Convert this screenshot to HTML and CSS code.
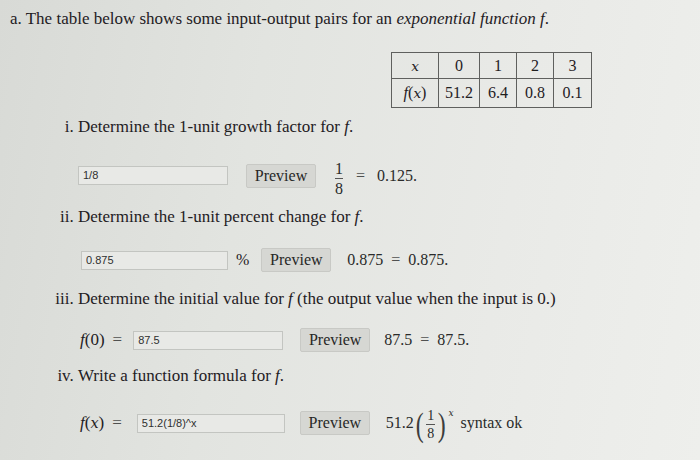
FILE: index.html
```html
<!DOCTYPE html>
<html>
<head>
<meta charset="utf-8">
<link rel="stylesheet" href="styles.css">
</head>
<body>
<div class="page">
  <p class="intro"><span class="label">a.</span> The table below shows some input-output pairs for an <em>exponential function</em> <i class="fn">f</i>.</p>
  <div class="table-wrap">
    <table class="pairs">
      <colgroup><col class="c0"><col class="c1"><col class="c2"><col class="c3"><col class="c4"></colgroup>
      <tr><th><i class="mx">x</i></th><td>0</td><td>1</td><td>2</td><td>3</td></tr>
      <tr><th><i class="fn">f</i>(<i class="mx">x</i>)</th><td>51.2</td><td>6.4</td><td>0.8</td><td>0.1</td></tr>
    </table>
  </div>
  <ol class="parts">
    <li class="part p1">
      <p class="q">Determine the 1-unit growth factor for <i class="fn">f</i>.</p>
      <div class="answer">
        <input class="field" type="text" value="1/8" readonly>
        <button class="preview">Preview</button>
        <span class="math">
          <span class="frac"><span class="num">1</span><span class="den">8</span></span>
          <span class="eq">=</span>
          <span>0.125.</span>
        </span>
      </div>
    </li>
    <li class="part p2">
      <p class="q">Determine the 1-unit percent change for <i class="fn">f</i>.</p>
      <div class="answer">
        <input class="field" type="text" value="0.875" readonly>
        <span class="unit">%</span>
        <button class="preview">Preview</button>
        <span class="math"><span>0.875</span><span class="eq">=</span><span>0.875.</span></span>
      </div>
    </li>
    <li class="part p3">
      <p class="q">Determine the initial value for <i class="fn">f</i> (the output value when the input is 0.)</p>
      <div class="answer">
        <span class="lhs"><i class="fn">f</i>(0)<span class="eq">=</span></span>
        <input class="field" type="text" value="87.5" readonly>
        <button class="preview">Preview</button>
        <span class="math"><span>87.5</span><span class="eq">=</span><span>87.5.</span></span>
      </div>
    </li>
    <li class="part p4">
      <p class="q">Write a function formula for <i class="fn">f</i>.</p>
      <div class="answer">
        <span class="lhs"><i class="fn">f</i>(<i class="mx">x</i>)<span class="eq">=</span></span>
        <input class="field" type="text" value="51.2(1/8)^x" readonly>
        <button class="preview">Preview</button>
        <span class="math">
          <span>51.2</span><span class="paren">(</span><span class="frac small"><span class="num">1</span><span class="den">8</span></span><span class="paren">)</span><sup class="exp">x</sup>
        </span>
        <span class="status">syntax ok</span>
      </div>
    </li>
  </ol>
</div>
</body>
</html>
```
FILE: styles.css
```css
html, body {
  margin: 0;
  padding: 0;
}
body {
  width: 700px;
  height: 460px;
  overflow: hidden;
  background: linear-gradient(100deg, #d8dad6 0%, #e2e4e0 35%, #e9eae7 70%, #eeefec 100%);
  font-family: "Liberation Serif", "Times New Roman", serif;
  color: #1f201f;
  font-size: 17px;
}
.page {
  padding: 9px 0 0 0;
}
.intro {
  margin: 0;
  padding-left: 10px;
  line-height: 20px;
}
.intro em, .fn, .mx {
  font-style: italic;
}
.mx {
  font-family: "DejaVu Serif", serif;
  font-size: 0.85em;
}
.table-wrap {
  display: flex;
  justify-content: flex-end;
  padding-right: 108px;
  margin-top: 23px;
}
.pairs {
  border-collapse: collapse;
  table-layout: fixed;
  width: 200px;
  font-size: 16px;
}
.pairs col.c0 { width: 47px; }
.pairs col.c1 { width: 41px; }
.pairs col.c2 { width: 37px; }
.pairs col.c3 { width: 37px; }
.pairs col.c4 { width: 38px; }
.pairs th, .pairs td {
  border: 1px solid #5f605e;
  text-align: center;
  font-weight: normal;
  padding: 0;
}
.pairs tr:first-child th, .pairs tr:first-child td { height: 25px; }
.pairs tr:last-child th, .pairs tr:last-child td { height: 28px; }
.parts {
  margin: 9px 0 0 0;
  padding-left: 78px;
  list-style: lower-roman;
}
.part .q {
  margin: 0;
  line-height: 20px;
}
.answer {
  display: flex;
  align-items: center;
  height: 36px;
}
.p1 .answer { margin: 21px 0 13px; }
.p2 .answer { margin: 15px 0 11px; }
.p3 .answer { margin: 13px 0 8px; }
.p4 .answer { margin: 19px 0 0; }
.field {
  box-sizing: border-box;
  width: 150px;
  height: 19px;
  margin: 0;
  padding: 0 4px;
  border: 1px solid #c3c5c1;
  background: #e8e9e6;
  font-family: "Liberation Sans", Arial, sans-serif;
  font-size: 11px;
  color: #2f302f;
  outline: none;
}
.p1 .field { margin-right: 18px; margin-top: -2px; }
.p2 .field { margin-left: 3px; width: 147px; }
.p3 .field { margin-left: 11px; margin-right: 17px; }
.p4 .field { margin-left: 15px; margin-right: 15px; width: 148px; }
.preview {
  box-sizing: border-box;
  width: 70px;
  height: 24px;
  margin: 0;
  padding: 0;
  border: 1px solid #c8c9c5;
  border-radius: 2px;
  background: #d6d7d3;
  font-family: "Liberation Serif", "Times New Roman", serif;
  font-size: 16px;
  color: #262726;
}
.unit {
  margin: 0 12px 0 8px;
  font-size: 16px;
}
.math {
  display: inline-flex;
  align-items: center;
  margin-left: 16px;
  font-size: 16px;
  color: #2a2b2a;
}
.p1 .math { margin-left: 19px; }
.p3 .math { margin-left: 14px; }
.eq {
  margin: 0 8px;
  color: #505150;
}
.lhs {
  display: inline-flex;
  align-items: center;
  margin-left: 2px;
}
.lhs .eq { margin: 0 0 0 8px; }
.frac {
  display: inline-flex;
  flex-direction: column;
  align-items: center;
  line-height: 15px;
  margin-top: 5px;
}
.frac .num {
  border-bottom: 1px solid #555;
  padding: 0 1px 2px;
}
.frac .den {
  padding-top: 2px;
}
.p1 .frac .num, .p1 .frac .den { padding-left: 0; padding-right: 0; }
.p1 .eq { margin: 0 12px 0 13px; }
.frac.small {
  font-size: 14px;
  line-height: 13px;
  margin: 3px 1px 0;
}
.paren {
  font-size: 34px;
  line-height: 30px;
  color: #3c3d3c;
  transform: scaleX(0.7);
  margin-top: 3px;
}
.exp {
  font-family: "DejaVu Serif", serif;
  font-style: italic;
  font-size: 9px;
  align-self: flex-start;
  margin: 2px 0 0 1px;
  vertical-align: baseline;
}
.status {
  margin-left: 7px;
  font-size: 16px;
  color: #2a2b2a;
}
```
